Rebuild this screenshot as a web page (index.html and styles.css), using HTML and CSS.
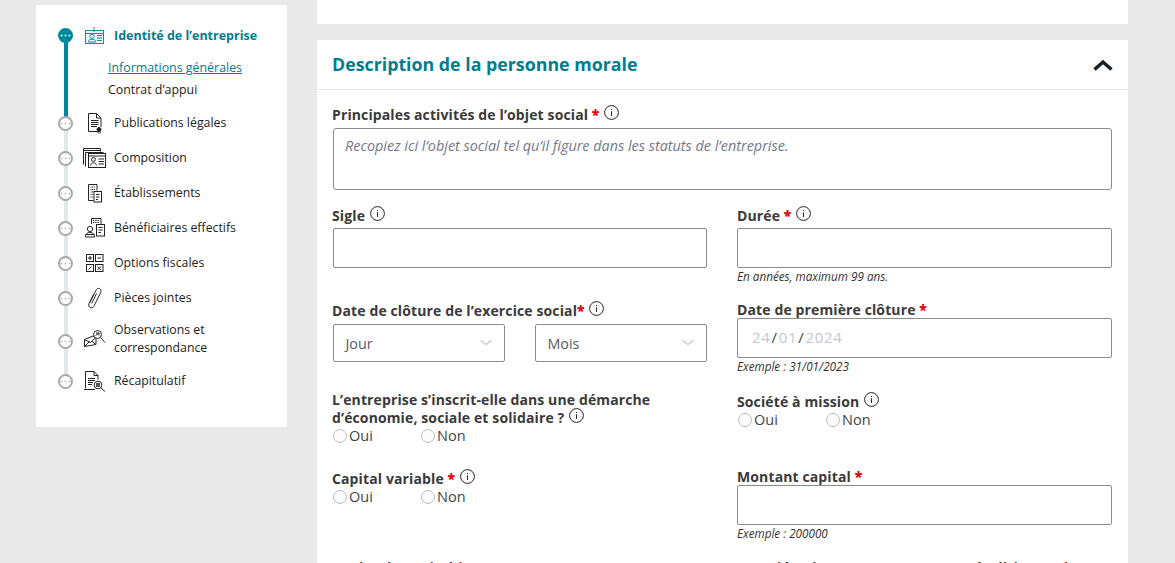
FILE: index.html
```html
<!DOCTYPE html>
<html lang="fr">
<head>
<meta charset="utf-8">
<title>Description de la personne morale</title>
<link rel="stylesheet" href="styles.css">
</head>
<body>
<svg class="defs" aria-hidden="true">
  <symbol id="info" viewBox="0 0 15 15"><circle cx="7.5" cy="7.5" r="6.9" fill="none" stroke="#222" stroke-width="1"/><path d="M7.5 4v1M7.5 6.3v4.6" fill="none" stroke="#222" stroke-width="1"/></symbol>
  <symbol id="dots" viewBox="0 0 15 15"><circle cx="2.2" cy="7.5" r="1.300"/><circle cx="7.5" cy="7.5" r="1.300"/><circle cx="12.800" cy="7.5" r="1.300"/></symbol>
</svg>
<div class="page">
  <aside class="side">
    <ul class="steps">
      <li class="rail rail-done"></li>
      <li class="rail rail-todo"></li>
      <li class="step active">
        <svg class="dot"><use href="#dots"/></svg>
        <svg class="ico" viewBox="0 0 24 24"><g fill="none" stroke="#1f8a9b" stroke-width="1"><rect x="2.5" y="6.5" width="18" height="13" fill="#eaf4f6"/><path d="M11 3v5M2.5 9.500h18"/><circle cx="9" cy="12.300" r="2.100" fill="#fff"/><path d="M5.500 18v-.7c0-1.400 1.500-2 3.500-2s3.500.6 3.500 2v.7zM14 11.500h5M14 14h5M14 16.500h5"/></g></svg>
        <span class="name">Identité de l’entreprise</span>
      </li>
      <li class="subs">
        <a class="sub current" href="#">Informations générales</a>
        <a class="sub" href="#">Contrat d’appui</a>
      </li>
      <li class="step">
        <svg class="dot"><use href="#dots"/></svg>
        <svg class="ico" viewBox="0 0 24 24"><g fill="none" stroke="#222" stroke-width="1"><path d="M5.500 20.500V2.500h8l4.500 4.500v9M13.500 2.500v4.500H18M8 9.500h7.500M8 11.500h7.500M8 13.500h7.500M8 15.500h6M5.500 20.500h9"/><circle cx="16" cy="18.500" r="2" fill="#222"/><path d="M15 20v2.500M17 20v2.500"/></g></svg>
        <span class="name">Publications légales</span>
      </li>
      <li class="step">
        <svg class="dot"><use href="#dots"/></svg>
        <svg class="ico" viewBox="0 0 24 24"><g fill="none" stroke="#222" stroke-width="1"><path d="M.5 18.500V2.500h17v3M.5 4.500h17M2.500 20.500V6.500h18"/><rect x="5.500" y="7.500" width="17" height="14" fill="#fff"/><path d="M5.500 10h17"/><circle cx="10.500" cy="13.500" r="1.900"/><path d="M7.500 19.500c.4-2 1.600-2.700 3-2.700s2.600.7 3 2.700M15.500 13h5.500M15.500 15.500h5.500M15.500 18h5.500"/></g></svg>
        <span class="name">Composition</span>
      </li>
      <li class="step">
        <svg class="dot"><use href="#dots"/></svg>
        <svg class="ico" viewBox="0 0 24 24"><g fill="none" stroke="#222" stroke-width="1"><path d="M5.500 19.500V3.500h8.500v6M5.500 19.500h5"/><path d="M7.500 6h4.500M7.500 8.500h4.500M7.500 11h4.500M7.500 13.500h2.500M7.500 16h2.500" stroke-dasharray="1 .7"/><rect x="11" y="10.500" width="7.500" height="10.500" fill="#fff"/><path d="M13 13.500h3.500M13 16h3.500M13 18.500h2"/></g></svg>
        <span class="name">Établissements</span>
      </li>
      <li class="step">
        <svg class="dot"><use href="#dots"/></svg>
        <svg class="ico" viewBox="0 0 24 24"><g fill="none" stroke="#222" stroke-width="1"><path d="M8.500 8V2.500h9.500V8"/><path d="M10 4.500h6.500M10 6.500h6.500" stroke-dasharray="1 .7"/><rect x="13.500" y="8.500" width="8" height="11.500"/><path d="M15.500 11.500h4M15.500 14h4M15.500 16.500h2.500"/><circle cx="7" cy="13" r="2.600"/><path d="M2.500 21c0-3.500 2-4.500 4.500-4.500s4.500 1 4.500 4.500zM2.500 18.500h9"/></g></svg>
        <span class="name">Bénéficiaires effectifs</span>
      </li>
      <li class="step">
        <svg class="dot"><use href="#dots"/></svg>
        <svg class="ico" viewBox="0 0 24 24"><g fill="none" stroke="#222" stroke-width="1"><rect x="3.500" y="3.500" width="7" height="7"/><rect x="12.500" y="3.500" width="7.500" height="7"/><rect x="3.500" y="13.500" width="7" height="7"/><rect x="12.500" y="13.500" width="7.500" height="7"/><path d="M5 7h4M7 5v4M14.500 7h3.500M5.500 18.500l3-3M14.500 15.500l3.500 3.500M18 15.500l-3.500 3.500"/></g></svg>
        <span class="name">Options fiscales</span>
      </li>
      <li class="step">
        <svg class="dot"><use href="#dots"/></svg>
        <svg class="ico" viewBox="0 0 24 24"><path d="M10.500 8.500l-4.500 9c-1 2.500 .5 4 1.700 4.300 1.800.4 2.800-.8 3.500-2.200l6.500-13c.8-1.800.3-3.300-1.200-4-1.500-.6-2.800.1-3.600 1.700l-6 12.200M13.500 7.500l-4.800 10" fill="none" stroke="#222" stroke-width="1"/></svg>
        <span class="name">Pièces jointes</span>
      </li>
      <li class="step tall">
        <svg class="dot"><use href="#dots"/></svg>
        <svg class="ico" viewBox="0 0 24 24"><g fill="none" stroke="#222" stroke-width="1"><path d="M1.500 11.500l8.500-3.500 3 1v7.500l-11.500 2zM1.500 11.500l6 3 5.500-5M1.500 18.500l5-5M9 13.500l4 3"/><circle cx="14.500" cy="6.500" r="4" fill="#fff"/><path d="M12.500 7.500l3.500-2.500M13 5h3v2.500" /><path d="M17.500 9.500l4.500 5"/></g></svg>
        <span class="name">Observations et correspondance</span>
      </li>
      <li class="step">
        <svg class="dot"><use href="#dots"/></svg>
        <svg class="ico" viewBox="0 0 24 24"><g fill="none" stroke="#222" stroke-width="1"><path d="M2.500 19.500V2.500h8.500l4 4v4M11 2.500v4h4M1 20.500h11"/><path d="M5 9.500h7M5 11.500h7M5 13.500h5M5 15.500h4"/><circle cx="15" cy="16" r="3.800" fill="#fff"/><path d="M13 15h4M13 17h4" stroke-width="1.500"/><path d="M18 19l4 3.500"/></g></svg>
        <span class="name">Récapitulatif</span>
      </li>
    </ul>
  </aside>
  <main class="main">
    <div class="stub"></div>
    <section class="card">
      <header class="card-head">
        <h2>Description de la personne morale</h2>
        <svg class="chev" viewBox="0 0 20 12"><path d="M1.500 10.500l8.500-7.500 8.500 7.500" fill="none" stroke="#16202c" stroke-width="3.500"/></svg>
      </header>
      <div class="form">
        <div class="field wide">
          <label class="lab">Principales activités de l’objet social <b>*</b> <svg class="i"><use href="#info"/></svg></label>
          <div class="box area">Recopiez ici l’objet social tel qu’il figure dans les statuts de l’entreprise.</div>
        </div>
        <div class="row r-sigle">
          <div class="field">
            <label class="lab">Sigle <svg class="i"><use href="#info"/></svg></label>
            <div class="box"></div>
          </div>
          <div class="field">
            <label class="lab">Durée <b>*</b> <svg class="i"><use href="#info"/></svg></label>
            <div class="box"></div>
            <p class="hint">En années, maximum 99 ans.</p>
          </div>
        </div>
        <div class="row r-date">
          <div class="field">
            <label class="lab lab-date">Date de clôture de l’exercice social<b>*</b> <svg class="i"><use href="#info"/></svg></label>
            <div class="selects">
              <div class="box sel">Jour<svg class="caret" viewBox="0 0 12 6"><path d="M.5.500l5.500 4 5.500-4" fill="none" stroke="#c4c8cc" stroke-width="1.300"/></svg></div>
              <div class="box sel">Mois<svg class="caret" viewBox="0 0 12 6"><path d="M.5.500l5.500 4 5.500-4" fill="none" stroke="#c4c8cc" stroke-width="1.300"/></svg></div>
            </div>
          </div>
          <div class="field">
            <label class="lab lab-tight">Date de première clôture <b>*</b></label>
            <div class="box datebox"><span>24</span><i>/</i><span>01</span><i>/</i><span>2024</span></div>
            <p class="hint">Exemple : 31/01/2023</p>
          </div>
        </div>
        <div class="row r-ess">
          <div class="field">
            <label class="lab">L’entreprise s’inscrit-elle dans une démarche d’économie, sociale et solidaire ? <svg class="i"><use href="#info"/></svg></label>
            <div class="radios"><span class="radio">Oui</span><span class="radio">Non</span></div>
          </div>
          <div class="field f-mission">
            <label class="lab">Société à mission <svg class="i"><use href="#info"/></svg></label>
            <div class="radios"><span class="radio">Oui</span><span class="radio">Non</span></div>
          </div>
        </div>
        <div class="row r-cap">
          <div class="field">
            <label class="lab">Capital variable <b>*</b> <svg class="i"><use href="#info"/></svg></label>
            <div class="radios"><span class="radio">Oui</span><span class="radio">Non</span></div>
          </div>
          <div class="field f-montant">
            <label class="lab lab-tight">Montant capital <b>*</b></label>
            <div class="box"></div>
            <p class="hint">Exemple : 200000</p>
          </div>
        </div>
        <div class="row r-last">
          <div class="field"><label class="lab">Devise du capital <b>*</b></label></div>
          <div class="field"><label class="lab">Associé unique ou personne morale dirigeant <b>*</b></label></div>
        </div>
      </div>
    </section>
  </main>
</div>
</body>
</html>
```
FILE: styles.css
```css
* { box-sizing: border-box; }
html, body { margin: 0; height: 563px; overflow: hidden; }
body { background: #e9e9e9; font-family: "Open Sans", "Noto Sans", sans-serif; color: #222; }
.defs { width: 0; height: 0; display: block; }
.page { display: flex; align-items: flex-start; gap: 30px; padding-left: 36px; }

.side { width: 251px; height: 422px; margin-top: 5px; background: #fff; border-radius: 3px; padding: 13px 0 0 22px; }
.steps { position: relative; list-style: none; margin: 0; padding: 0; }
.rail { position: absolute; left: 6px; width: 3.500px; z-index: 0; }
.rail-done { top: 18px; height: 87px; background: #00879b; }
.rail-todo { top: 105px; height: 258px; background: #e0e8ea; }
.step { position: relative; display: flex; align-items: center; height: 35px; z-index: 1; }
.step.tall { height: 48px; }
.step.tall .name { width: 130px; line-height: 18px; margin-bottom: 2px; }
.dot { width: 15px; height: 15px; flex: none; border-radius: 50%; background: #fff; border: 2px solid #a9a9a9; fill: #bdbdbd; margin-right: 10px; overflow: visible; }
.step.tall .dot { margin-top: 3px; }
.ico { width: 24px; height: 24px; flex: none; margin-right: 7px; }
.name { font-size: 12.300px; color: #222; margin-bottom: 2px; }
.active .dot { background: #00879b; border-color: #00879b; fill: #fff; }
.active .name { font-weight: 700; font-size: 12.500px; color: #007d8f; margin-bottom: 0; }
.subs { position: relative; z-index: 1; display: flex; flex-direction: column; padding: 4px 0 4.500px 50px; }
.sub { font-size: 12.400px; line-height: 22px; color: #222; text-decoration: none; }
.sub.current { color: #007d8f; text-decoration: underline; }

.main { width: 811px; }
.stub { height: 24px; background: #fff; }
.card { margin-top: 16px; background: #fff; height: 523px; }
.card-head { display: flex; align-items: center; justify-content: space-between; height: 50px; padding: 0 15px; border-bottom: 1px solid #e6e6e6; }
.card-head h2 { margin: 0 0 2px; font-size: 17.800px; font-weight: 700; color: #007d8f; }
.chev { width: 20px; height: 12px; }
.form { padding: 16px 16px 0 15px; }
.lab { display: block; font-size: 14px; line-height: 18px; font-weight: 700; letter-spacing: .12px; color: #3a3a3a; }
.lab b { color: #e30613; }
.i { width: 15px; height: 15px; vertical-align: 0; margin: -4px 0 0 1px; }
.box { margin-left: 1px; height: 40px; background: #fff; border: 1px solid #8c8c8c; border-radius: 2px; }
.field.wide .lab { height: 22px; }
.area { height: 62px; padding: 7px 11px; font-size: 14.400px; font-style: italic; color: #74788c; border-radius: 3px; }
.row { display: grid; grid-template-columns: 375px 375px; column-gap: 30px; }
.r-sigle { margin-top: 17px; }
.r-sigle .lab { height: 21px; }
.r-sigle .field + .field .box, .r-date .field + .field .box, .r-cap .field + .field .box { margin-left: 0; }
.hint { margin: 1px 0 1px; font-size: 11.700px; line-height: 14px; font-style: italic; color: #333; }
.r-date { margin-top: 17px; }
.lab-date { height: 23px; padding-top: 1px; }
.lab-tight { height: 17px; }
.selects { display: flex; gap: 30px; margin-left: 1px; }
.sel { flex: 1; margin: 0; height: 38px; display: flex; align-items: center; justify-content: space-between; padding: 0 12px 0 11.500px; font-size: 14.300px; color: #555a66; }
.sel .caret { width: 12px; height: 6px; }
.datebox { display: flex; align-items: center; padding: 0 0 2px 14px; font-size: 15px; letter-spacing: .7px; }
.datebox span { color: #c4c8cc; }
.datebox i { font-style: normal; color: #444; margin: 0 1px; }
.r-ess { margin-top: 17px; height: 79px; }
.f-mission { padding-top: 2px; }
.radios { display: flex; height: 18px; font-size: 14.500px; line-height: 18px; color: #444; }
.radio { display: flex; align-items: center; gap: 2px; width: 88px; margin-left: 1px; }
.radio + .radio { margin-left: 0; }
.radio::before { content: ""; flex: none; width: 12px; height: 12px; border-radius: 50%; border: 1px solid #bdbdbd; background: #fbfbfb; }
.f-montant { margin-top: -2px; }
.r-last { margin-top: 18px; }
```
